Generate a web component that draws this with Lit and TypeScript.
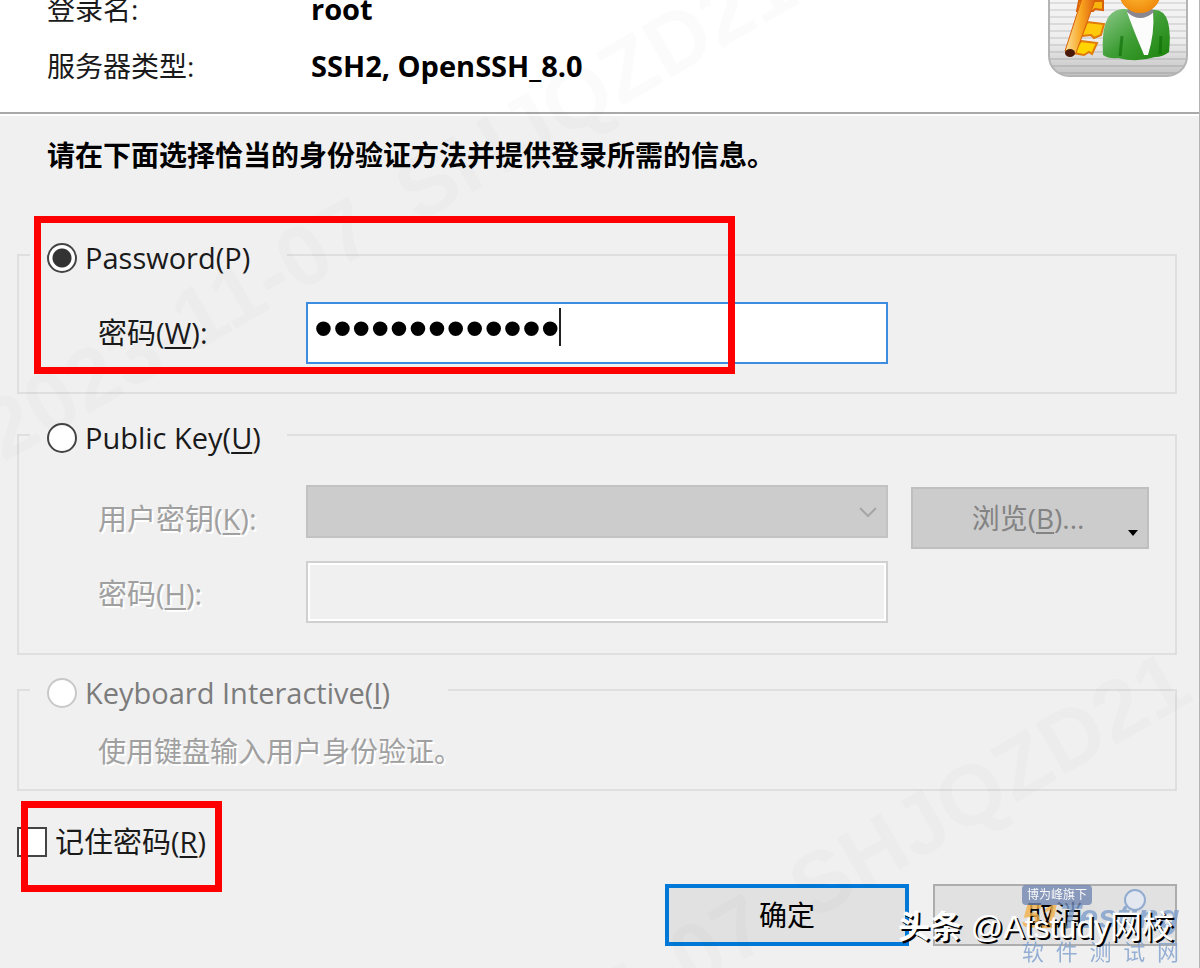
import { LitElement, html, css, svg } from "lit";
import { customElement, state } from "lit/decorators.js";

type Method = "password" | "publickey" | "keyboard";

@customElement("dialog-emblem")
class DialogEmblem extends LitElement {
  static styles = css`
    :host { display: block; }
    svg { display: block; }
  `;

  render() {
    const stripes = Array.from({ length: 20 }, (_, i) => i * 7 + 3);
    return html`
      <svg width="142" height="142" viewBox="0 0 142 142" aria-hidden="true">
        <defs>
          <linearGradient id="tile" x1="0" y1="0" x2="0" y2="1">
            <stop offset="0" stop-color="#ffffff" />
            <stop offset=".75" stop-color="#ededed" />
            <stop offset="1" stop-color="#c2c2c2" />
          </linearGradient>
          <linearGradient id="coat" x1="0" y1="0" x2="1" y2="1">
            <stop offset="0" stop-color="#8cc98a" />
            <stop offset=".5" stop-color="#3f9e35" />
            <stop offset="1" stop-color="#1a8209" />
          </linearGradient>
          <linearGradient id="gold" x1="0" y1="0" x2="1" y2="0">
            <stop offset="0" stop-color="#fbe29a" />
            <stop offset=".5" stop-color="#f8a31f" />
            <stop offset="1" stop-color="#d9560c" />
          </linearGradient>
          <radialGradient id="face" cx=".45" cy=".4" r=".6">
            <stop offset="0" stop-color="#ffc53d" />
            <stop offset="1" stop-color="#f08a0c" />
          </radialGradient>
          <clipPath id="round"><rect x="2" y="2" width="138" height="138" rx="20" /></clipPath>
        </defs>
        <rect x="2" y="2" width="138" height="138" rx="20" fill="url(#tile)" />
        <g clip-path="url(#round)">
          ${stripes.map((y) => svg`<rect x="0" y=${y} width="142" height="2" fill="#000" opacity=".09" />`)}
        </g>
        <path d="M32 65 H56 V74 L48 73 L46 75 H30 Z" fill="#f6b40c" stroke="#d9610a" stroke-width="2" />
        <path d="M40 86 L57 88 L54 99 L47 102 L44 99 L34 100 Z" fill="#ffc90e" stroke="#e07a0a" stroke-width="2" />
        <path d="M34 105 L50 107 L45 118 L42 116 L37 119 L26 117 Z" fill="#ffd400" stroke="#e07a0a" stroke-width="2" />
        <path d="M37 56 L51 56 L29 117 Q24 122 18 115 Z" fill="url(#gold)" stroke="#d9610a" stroke-width="1" />
        <ellipse cx="23" cy="117" rx="5" ry="4" fill="#4a1806" />
        <path d="M56 119 Q54 86 65 77 Q73 71 83 74 H104 Q117 72 121 86 Q124 98 122 116 Q116 121 108 121 Q90 127 71 122 Q62 123 56 119 Z" fill="url(#coat)" />
        <path d="M73 120 L75 100 M113 118 L114 100" stroke="#0c6a05" stroke-width="3" opacity=".6" fill="none" />
        <path d="M80 76 L106 76 Q108 96 101 119 L97 119 L95 114 Q88 98 80 76 Z" fill="#fcfcfc" />
        <path d="M80 76 Q93 88 107 76 L104 71 H82 Z" fill="#8b8790" />
        <circle cx="93" cy="56" r="21" fill="url(#face)" />
        <rect x="2" y="2" width="138" height="138" rx="20" fill="none" stroke="#b4b4b4" stroke-width="2" />
      </svg>
    `;
  }
}

@customElement("app-root")
class AppRoot extends LitElement {
  static styles = css`
    :host {
      display: block;
      color: #1a1a1a;
      font-family: "Open Sans", "Noto Sans CJK SC", sans-serif;
      font-size: 28px;
      line-height: 40px;
    }
    * { box-sizing: border-box; }
    .dialog {
      position: relative;
      min-height: 100vh;
      overflow: hidden;
      background: #f0f0f0;
      border-right: 1px solid #b4b4b4;
    }
    .head {
      display: flex;
      justify-content: space-between;
      align-items: flex-end;
      height: 114px;
      padding: 0 10px 26px 47px;
      overflow: hidden;
      background: #fff;
      border-bottom: 2px solid #a8a9a8;
    }
    .facts {
      display: grid;
      grid-template-columns: 264px auto;
      row-gap: 17px;
      margin: 0;
    }
    .facts dd { margin: 0; font-size: 29px; font-weight: 700; color: #000; }
    .emblem { margin-bottom: 8px; }
    .body {
      padding: 19px 22px 23px 17px;
      border-top: 2px solid #fff;
    }
    .intro {
      margin: 0 0 61px 30px;
      font-weight: 700;
      color: #000;
    }
    .group {
      position: relative;
      min-width: 0;
      margin: 0;
      padding: 28px 26px 28px 79px;
      border: 2px solid #dfdfdf;
    }
    .group + .group { margin-top: 22px; }
    .group.keys { padding-top: 31px; padding-bottom: 30px; }
    .group.keyboard { margin-top: 16px; padding-top: 22px; padding-bottom: 18px; }
    .group legend {
      display: flex;
      align-items: center;
      min-width: 257px;
      height: 38px;
      margin-left: -68px;
      padding: 6px 0 0 17px;
    }
    .keyboard legend { min-width: 418px; }
    .choice { display: flex; align-items: center; gap: 8px; font-size: 29px; }
    input[type="radio"], input[type="checkbox"] {
      appearance: none;
      flex: none;
      width: 30px;
      height: 30px;
      margin: 0;
      background: #fff;
      border: 2px solid #444;
    }
    input[type="radio"] { border-radius: 50%; }
    input[type="radio"]:checked {
      background: radial-gradient(circle, #333 9px, #fff 10px);
    }
    input[type="radio"]:disabled { border-color: #c8c8c8; }
    input[type="checkbox"]:checked { background: #444; box-shadow: inset 0 0 0 4px #fff; }
    .off { color: #7c7c7c; }
    u { text-decoration-thickness: 2px; text-underline-offset: 3px; text-decoration-skip-ink: none; }
    .rows {
      display: grid;
      grid-template-columns: 208px minmax(0, 1fr) 238px;
      row-gap: 12px;
      align-items: center;
    }
    .rows label { font-size: 29px; }
    .rows .ghost { padding-top: 4px; }
    .rows .gap { margin-right: 23px; }
    .field { position: relative; display: flex; }
    .field input, .field select {
      appearance: none;
      width: 100%;
      height: 62px;
      margin: 0;
      padding: 0 8px;
      border: 2px solid #3c8ce0;
      border-radius: 0;
      background: #fff;
      outline: none;
      color: #000;
    }
    .field input[type="password"] {
      font-family: "Liberation Sans", sans-serif;
      font-size: 54px;
      line-height: 54px;
      padding: 0 6px 10px;
    }
    .field input:disabled {
      background: #f0f0f0;
      border-color: #d0d0d0;
      box-shadow: inset 0 0 0 2px #fff;
    }
    .pick { align-self: start; }
    .field select { height: 53px; background: #ccc; border-color: #c2c2c2; opacity: 1; }
    .chevron { position: absolute; right: 10px; top: 20px; }
    .caret {
      position: absolute;
      left: 253px;
      top: 6px;
      width: 2px;
      height: 38px;
      background: #222;
    }
    .ghost { color: #a0a0a0; text-shadow: 2px 2px 0 #fff; }
    .note { margin: 0; }
    button {
      position: relative;
      height: 62px;
      margin: 0;
      padding: 0;
      border: 2px solid #adadad;
      border-radius: 0;
      background: #e1e1e1;
      color: #000;
      font: inherit;
    }
    .browse {
      align-self: end;
      margin-top: 2px;
      background: #ccc;
      border-color: #bfbfbf;
      color: #838383;
      padding-right: 4px;
    }
    .drop { position: absolute; right: 8px; bottom: 10px; }
    .remember-line { position: relative; display: flex; margin-top: 31px; }
    .actions { display: flex; justify-content: flex-end; gap: 24px; margin-top: 22px; }
    .actions button { width: 244px; }
    .actions .primary { border: 4px solid #0078d7; }
    .mark {
      position: absolute;
      z-index: 2;
      border: 7px solid #f00;
      pointer-events: none;
    }
    .mark.login { left: 15px; right: 440px; top: -58px; bottom: 18px; }
    .mark.save { left: 4px; top: -21px; width: 201px; height: 91px; }
    .stamp {
      position: absolute;
      inset: 0;
      width: 100%;
      height: 100%;
      z-index: 1;
      pointer-events: none;
      fill: #000;
      opacity: .013;
      font: 700 86px "Liberation Sans", sans-serif;
    }
    .brand {
      position: absolute;
      z-index: 3;
      right: 20px;
      bottom: 3px;
      display: flex;
      flex-direction: column;
      align-items: stretch;
      width: 157px;
      color: #7f9fcd;
      opacity: .8;
      pointer-events: none;
    }
    .badge {
      align-self: flex-start;
      padding: 0 5px;
      border-radius: 4px;
      background: #7488b2;
      color: #fff;
      font-size: 12px;
      line-height: 20px;
    }
    .word {
      position: relative;
      font: italic 700 34px/22px "Liberation Sans", sans-serif;
      white-space: nowrap;
    }
    .word .num { color: #f3b24a; }
    .word svg { position: absolute; left: 101px; top: -17px; }
    .sub {
      display: flex;
      justify-content: space-between;
      margin-top: 9px;
      font-size: 22px;
      line-height: 30px;
    }
    .credit {
      position: absolute;
      z-index: 4;
      right: 25px;
      bottom: 20px;
      color: #fff;
      font: 32px/44px "Liberation Sans", "Noto Sans CJK SC", sans-serif;
      text-shadow: 2px 2px 0 #000;
      white-space: nowrap;
      pointer-events: none;
    }
    .credit b { font-weight: 700; }
  `;

  @state() private method: Method = "password";

  private radio(value: Method, id: string, disabled = false) {
    return html`<input
      type="radio"
      name="method"
      id=${id}
      .checked=${this.method === value}
      ?disabled=${disabled}
      @change=${() => (this.method = value)}
    />`;
  }

  private stampLine(x: number, y: number) {
    return svg`
      <g transform="translate(${x} ${y}) rotate(-30)">
        <text x="-340" y="30">2023-11-07</text>
        <text x="138" y="30">SHJQZD21</text>
      </g>
    `;
  }

  render() {
    return html`
      <main class="dialog">
        <header class="head">
          <dl class="facts">
            <dt>登录名:</dt>
            <dd>root</dd>
            <dt>服务器类型:</dt>
            <dd>SSH2, OpenSSH_8.0</dd>
          </dl>
          <dialog-emblem class="emblem"></dialog-emblem>
        </header>

        <form class="body" @submit=${(e: Event) => e.preventDefault()}>
          <p class="intro">请在下面选择恰当的身份验证方法并提供登录所需的信息。</p>

          <fieldset class="group">
            <legend>
              <label class="choice">${this.radio("password", "m1")}<span>Password(P)</span></label>
            </legend>
            <div class="rows">
              <label for="pw">密码(<u>W</u>):</label>
              <div class="field gap">
                <input id="pw" type="password" value="1234567890123" autocomplete="off" />
                <span class="caret"></span>
              </div>
            </div>
            <div class="mark login"></div>
          </fieldset>

          <fieldset class="group keys">
            <legend>
              <label class="choice">${this.radio("publickey", "m2")}<span>Public Key(<u>U</u>)</span></label>
            </legend>
            <div class="rows">
              <label class="ghost" for="key">用户密钥(<u>K</u>):</label>
              <div class="field gap pick">
                <select id="key" disabled></select>
                <svg class="chevron" width="20" height="14" viewBox="0 0 20 14" aria-hidden="true">
                  <path d="M2 3 L10 11 L18 3" fill="none" stroke="#a6a6a6" stroke-width="2" />
                </svg>
              </div>
              <button class="browse" type="button" disabled>
                浏览(<u>B</u>)...
                <svg class="drop" width="12" height="8" viewBox="0 0 12 8" aria-hidden="true">
                  <path d="M1 1 H11 L6 7 Z" fill="#000" />
                </svg>
              </button>
              <label class="ghost" for="phrase">密码(<u>H</u>):</label>
              <div class="field gap"><input id="phrase" type="password" disabled /></div>
            </div>
          </fieldset>

          <fieldset class="group keyboard">
            <legend>
              <label class="choice off">
                ${this.radio("keyboard", "m3", true)}<span>Keyboard Interactive(<u>I</u>)</span>
              </label>
            </legend>
            <p class="note ghost">使用键盘输入用户身份验证。</p>
          </fieldset>

          <div class="remember-line">
            <label class="choice">
              <input type="checkbox" /><span>记住密码(<u>R</u>)</span>
            </label>
            <div class="mark save"></div>
          </div>

          <div class="actions">
            <button class="primary" type="submit">确定</button>
            <button type="button">取消</button>
          </div>
        </form>

        <svg class="stamp" aria-hidden="true">
          ${this.stampLine(283, 267)} ${this.stampLine(677, 964)}
        </svg>

        <div class="brand">
          <span class="badge">博为峰旗下</span>
          <div class="word">
            <span class="num">51</span>Testing
            <svg width="24" height="24" viewBox="0 0 24 24" aria-hidden="true">
              <circle cx="12" cy="12" r="10" fill="#e4eaf4" stroke="#7f9fcd" stroke-width="2" />
            </svg>
          </div>
          <div class="sub">${[..."软件测试网"].map((c) => html`<span>${c}</span>`)}</div>
        </div>
        <div class="credit"><b>头条</b> @Atstudy网校</div>
      </main>
    `;
  }
}
